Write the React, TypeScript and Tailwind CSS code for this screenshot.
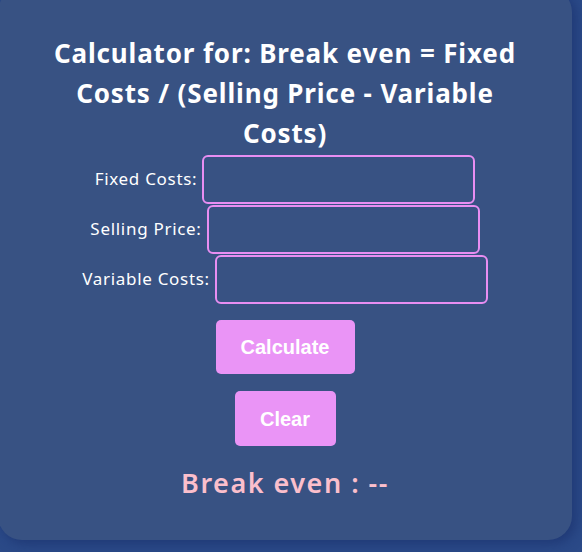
import { useState } from "react";

const FIELDS = [
  { key: "fixed", label: "Fixed Costs:" },
  { key: "price", label: "Selling Price:" },
  { key: "variable", label: "Variable Costs:" },
] as const;

type Key = (typeof FIELDS)[number]["key"];

export default function App() {
  const [vals, setVals] = useState<Record<Key, string>>({ fixed: "", price: "", variable: "" });
  const [result, setResult] = useState("--");

  const calculate = () => {
    const f = parseFloat(vals.fixed);
    const p = parseFloat(vals.price);
    const v = parseFloat(vals.variable);
    if (isNaN(f) || isNaN(p) || isNaN(v) || p - v === 0) return setResult("--");
    setResult((f / (p - v)).toFixed(2));
  };

  const clear = () => {
    setVals({ fixed: "", price: "", variable: "" });
    setResult("--");
  };

  return (
    <div className="w-[582px] h-[552px] overflow-hidden bg-[#2b4a88] font-['Noto_Sans',sans-serif]">
      <div className="-ml-[2px] -mt-[12px] w-[574px] h-[552px] rounded-[24px] bg-[#385283] shadow-[4px_4px_12px_rgba(20,40,100,0.5)] pt-[45px] flex flex-col items-center">
        <h1 className="w-[486px] text-center text-white font-bold text-[26px] leading-[40px] tracking-[0.85px]">
          Calculator for: Break even = Fixed Costs / (Selling Price - Variable Costs)
        </h1>

        <div className="mt-px flex flex-col items-center">
          {FIELDS.map(f => (
            <div key={f.key} className="flex items-center gap-[5px] h-[50px]">
              <label className="text-white text-[17px] tracking-[0.7px]">{f.label}</label>
              <input
                value={vals[f.key]}
                onChange={e => setVals(p => ({ ...p, [f.key]: e.target.value }))}
                className="w-[273px] h-[49px] rounded-[6px] border-2 border-[#e88ef2] bg-transparent text-white px-2 outline-none"
              />
            </div>
          ))}
        </div>

        <button
          onClick={calculate}
          className="mt-[16px] w-[139px] h-[54px] rounded-[5px] bg-[#ea94f6] text-white font-bold text-[20px] font-['Liberation_Sans',Arial,sans-serif]"
        >
          Calculate
        </button>
        <button
          onClick={clear}
          className="mt-[17px] w-[101px] h-[55px] rounded-[5px] bg-[#ea94f6] text-white font-bold text-[20px] font-['Liberation_Sans',Arial,sans-serif]"
        >
          Clear
        </button>

        <p className="mt-[17px] text-[#fbbfcc] font-semibold text-[27px] leading-[40px] tracking-[1.5px]">
          Break even : {result}
        </p>
      </div>
    </div>
  );
}
